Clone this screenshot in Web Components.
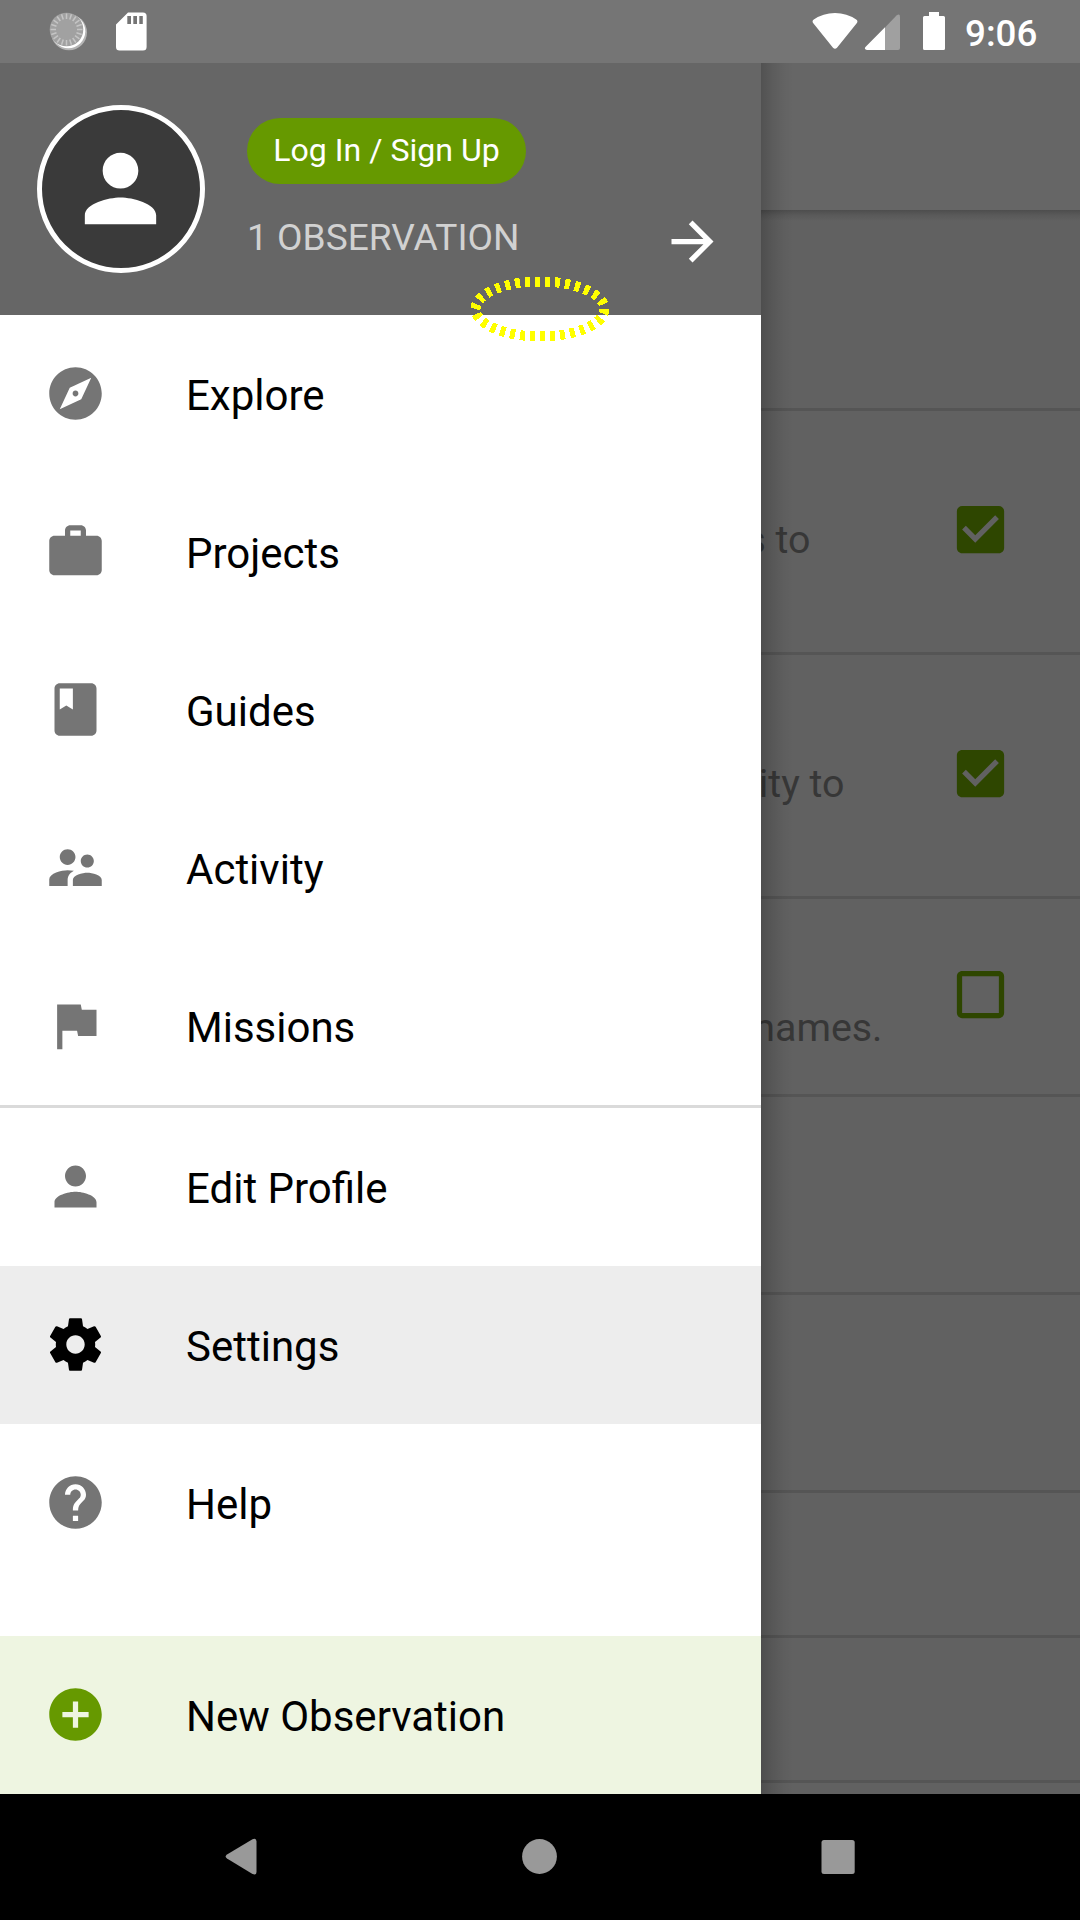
<!DOCTYPE html>
<html lang="en">
<head>
<meta charset="utf-8">
<title>Navigation drawer</title>
<style>
html,body{margin:0;padding:0}
body{width:1080px;height:1920px;overflow:hidden;background:#000;font-family:Roboto,"Noto Sans",sans-serif}
</style>
</head>
<body>
<app-screen></app-screen>
<script>
const define = (name, render) => customElements.define(name, class extends HTMLElement {
  constructor() {
    super();
    this.attachShadow({ mode: 'open' });
  }
  connectedCallback() {
    const t = document.createElement('template');
    t.innerHTML = render(this);
    this.shadowRoot.replaceChildren(t.content.cloneNode(true));
  }
});

const ICONS = {
  explore: 'M12 10.9c-.61 0-1.1.49-1.1 1.1s.49 1.1 1.1 1.1c.61 0 1.1-.49 1.1-1.1s-.49-1.1-1.1-1.1zM12 2C6.48 2 2 6.48 2 12s4.48 10 10 10 10-4.48 10-10S17.52 2 12 2zm2.19 12.19L6 18l3.81-8.19L18 6l-3.81 8.19z',
  work: 'M20 6h-4V4c0-1.11-.89-2-2-2h-4c-1.11 0-2 .89-2 2v2H4c-1.11 0-2 .89-2 2v11c0 1.11.89 2 2 2h16c1.11 0 2-.89 2-2V8c0-1.11-.89-2-2-2zm-6 0h-4V4h4v2z',
  book: 'M18 2H6c-1.1 0-2 .9-2 2v16c0 1.1.9 2 2 2h12c1.1 0 2-.9 2-2V4c0-1.1-.9-2-2-2zM6 4h5v8l-2.5-1.5L6 12V4z',
  people: 'M16.5 12c1.38 0 2.49-1.12 2.49-2.5S17.88 7 16.5 7C15.12 7 14 8.12 14 9.5s1.12 2.5 2.5 2.5zM9 11c1.66 0 2.99-1.34 2.99-3S10.66 5 9 5C7.34 5 6 6.34 6 8s1.34 3 3 3zm7.5 3c-1.83 0-5.5.92-5.5 2.75V19h11v-2.25c0-1.83-3.67-2.75-5.5-2.75zM9 13c-2.33 0-7 1.17-7 3.5V19h7v-2.25c0-.85.33-2.34 2.37-3.47C10.5 13.1 9.66 13 9 13z',
  flag: 'M14.4 6L14 4H5v17h2v-7h5.6l.4 2h7V6z',
  person: 'M12 12c2.21 0 4-1.79 4-4s-1.79-4-4-4-4 1.79-4 4 1.79 4 4 4zm0 2c-2.67 0-8 1.34-8 4v2h16v-2c0-2.66-5.33-4-8-4z',
  settings: 'M19.43 12.98c.04-.32.07-.64.07-.98s-.03-.66-.07-.98l2.11-1.65c.19-.15.24-.42.12-.64l-2-3.46c-.12-.22-.39-.3-.61-.22l-2.49 1c-.52-.4-1.08-.73-1.69-.98l-.38-2.65C14.46 2.18 14.25 2 14 2h-4c-.25 0-.46.18-.49.42l-.38 2.65c-.61.25-1.17.59-1.69.98l-2.49-1c-.23-.09-.49 0-.61.22l-2 3.46c-.13.22-.07.49.12.64l2.11 1.65c-.04.32-.07.65-.07.98s.03.66.07.98l-2.11 1.65c-.19.15-.24.42-.12.64l2 3.46c.12.22.39.3.61.22l2.49-1c.52.4 1.08.73 1.69.98l.38 2.65c.03.24.24.42.49.42h4c.25 0 .46-.18.49-.42l.38-2.65c.61-.25 1.17-.59 1.69-.98l2.49 1c.23.09.49 0 .61-.22l2-3.46c.12-.22.07-.49-.12-.64l-2.11-1.65zM12 15.5c-1.93 0-3.5-1.57-3.5-3.5s1.57-3.5 3.5-3.5 3.5 1.57 3.5 3.5-1.57 3.5-3.5 3.5z',
  help: 'M12 2C6.48 2 2 6.48 2 12s4.48 10 10 10 10-4.48 10-10S17.52 2 12 2zm1 17h-2v-2h2v2zm2.07-7.75l-.9.92C13.45 12.9 13 13.5 13 15h-2v-.5c0-1.1.45-2.1 1.17-2.83l1.24-1.26c.37-.36.59-.86.59-1.41 0-1.1-.9-2-2-2s-2 .9-2 2H8c0-2.21 1.79-4 4-4s4 1.79 4 4c0 .88-.36 1.68-.93 2.25z',
  add: 'M12 2C6.48 2 2 6.48 2 12s4.48 10 10 10 10-4.48 10-10S17.52 2 12 2zm5 11h-4v4h-2v-4H7v-2h4V7h2v4h4v2z',
  arrow: 'M12 4l-1.41 1.41L16.17 11H4v2h12.17l-5.58 5.59L12 20l8-8z',
  checked: 'M19 3H5c-1.11 0-2 .9-2 2v14c0 1.1.89 2 2 2h14c1.11 0 2-.9 2-2V5c0-1.1-.89-2-2-2zm-9 14l-5-5 1.41-1.41L10 14.17l7.59-7.59L19 8l-9 9z',
  unchecked: 'M19 5v14H5V5h14m0-2H5c-1.1 0-2 .9-2 2v14c0 1.1.9 2 2 2h14c1.1 0 2-.9 2-2V5c0-1.1-.9-2-2-2z'
};

define('ui-icon', el => `
<style>:host{display:block;flex:none;width:63px;height:63px}svg{display:block;width:100%;height:100%;fill:currentColor}</style>
<svg viewBox="0 0 24 24"><path d="${ICONS[el.getAttribute('name')]}"/></svg>`);

const ticks = Array.from({ length: 20 }, (_, i) =>
  `<path d="M0-10.5V-16" transform="rotate(${i * 18})"/>`).join('');

define('status-bar', () => `
<style>
:host{display:flex;justify-content:space-between;height:63px;background:#757575;color:#fff}
svg{display:block;flex:none}
.right{display:flex;width:280px}
time{font-size:36.75px;line-height:43px;font-weight:500;padding-top:12px}
</style>
<svg width="160" height="63">
  <circle cx="69" cy="32.3" r="18" fill="#b5b5b5"/>
  <circle cx="68.3" cy="31.3" r="17" fill="#fff"/>
  <circle cx="66.5" cy="29.5" r="16.8" fill="#a1a1a1"/>
  <g transform="translate(66.5 29.5)" stroke="#c5c5c5" stroke-width="1.5">${ticks}</g>
  <path fill="#fff" fill-rule="evenodd" d="M128 12.5H143a3.6 3.6 0 0 1 3.6 3.6V47a3.6 3.6 0 0 1-3.6 3.6H119.6A3.6 3.6 0 0 1 116 47V24.5ZM127.3 16V24H131V16ZM133.3 16V24H137V16ZM139.3 16V24H142.8V16Z"/>
</svg>
<div class="right">
<svg width="165" height="63" viewBox="800 0 165 63">
  <path fill="#fff" d="M813.3 23.2Q811.6 21.2 813.8 19.6Q823 13 835 13T856.2 19.6Q858.4 21.2 856.7 23.2L837 47.7Q835 50 833 47.7Z"/>
  <path fill="#a0a0a0" d="M885 27.5L896.5 15.6Q900 13 900 17V48Q900 50 898 50H885Z"/>
  <path fill="#fff" d="M885 27.3V50H867Q863.5 49 865.7 46.8Z"/>
  <path fill="#fff" d="M929 12H939V16H943.5Q945 16 945 17.5V48.5Q945 50 943.5 50H924.5Q923 50 923 48.5V17.5Q923 16 924.5 16H929Z"/>
</svg>
<time>9:06</time>
</div>`);

define('setting-row', el => `
<style>
:host{display:flex;box-sizing:border-box;border-bottom:3px solid #555;color:#373737;height:${el.getAttribute('h')}px}
span{box-sizing:border-box;width:${el.getAttribute('end') || 0}px;padding-top:106px;text-align:right;font-size:39.375px;line-height:46px;white-space:nowrap}
ui-icon{margin-left:auto;align-self:center;margin-right:68px;margin-bottom:4px;color:#2e4600}
</style>
<span><slot></slot></span>${el.hasAttribute('icon') ? `<ui-icon name="${el.getAttribute('icon')}"></ui-icon>` : ''}`);

define('settings-page', () => `
<style>
:host{display:flex;flex-direction:column;background:#616161;overflow:hidden}
header{flex:none;height:147px;background:#666}
.shade{flex:none;height:11px;margin-bottom:-11px;background:linear-gradient(#4d4d4d,#595959 45%,#616161)}
setting-row{flex:none}
</style>
<header></header><div class="shade"></div>
<setting-row h="201"></setting-row>
<setting-row h="244" end="810.5" icon="checked">s to</setting-row>
<setting-row h="244" end="844.5" icon="checked">ity to</setting-row>
<setting-row h="198" end="882.5" icon="unchecked">names.</setting-row>
<setting-row h="198"></setting-row>
<setting-row h="198"></setting-row>
<setting-row h="145"></setting-row>
<setting-row h="145"></setting-row>`);

define('profile-header', () => `
<style>
:host{display:flex;height:252px;background:#666;color:#fff}
.avatar{box-sizing:border-box;width:168px;height:168px;margin:42px 42px 0 37px;border:5px solid #fff;border-radius:50%;background:#3a3a3a;display:flex}
.avatar ui-icon{width:107px;height:107px;margin:25px 0 0 25px}
.info{display:flex;flex-direction:column;align-items:flex-start;padding-top:55px;flex:1}
.login{box-sizing:border-box;width:279px;height:66px;border-radius:33px;background:#690;padding-top:14px;text-align:center;font-size:32.1px;line-height:37px;white-space:nowrap}
.count{margin-top:32px;font-size:37.1px;line-height:43px;color:#d1d1d1;white-space:nowrap}
.go{margin:147px 37px 0 0}
</style>
<div class="avatar"><ui-icon name="person"></ui-icon></div>
<div class="info"><div class="login">Log In / Sign Up</div><div class="count">1 OBSERVATION</div></div>
<ui-icon class="go" name="arrow"></ui-icon>`);

define('drawer-item', el => `
<style>
:host{display:flex;height:158px;color:#000}
:host([selected]){background:#ededed}
:host([primary]){background:#eef5e1}
ui-icon{margin:47px 79px 0 44px;color:#757575}
:host([selected]) ui-icon{color:#000}
:host([primary]) ui-icon{color:#690}
span{padding-top:56px;font-size:42px;line-height:49px;white-space:nowrap}
</style>
<ui-icon name="${el.getAttribute('icon')}"></ui-icon><span><slot></slot></span>`);

define('nav-drawer', () => `
<style>
:host{display:flex}
.panel{width:761px;display:flex;flex-direction:column;background:#fff}
.divider{height:3px;background:#dadada}
.spacer{flex:1}
.edge{width:33px;background:linear-gradient(90deg,rgba(0,0,0,.2),rgba(0,0,0,.1) 35%,rgba(0,0,0,.03) 70%,transparent)}
</style>
<div class="panel">
  <profile-header></profile-header>
  <drawer-item icon="explore">Explore</drawer-item>
  <drawer-item icon="work">Projects</drawer-item>
  <drawer-item icon="book">Guides</drawer-item>
  <drawer-item icon="people">Activity</drawer-item>
  <drawer-item icon="flag">Missions</drawer-item>
  <div class="divider"></div>
  <drawer-item icon="person">Edit Profile</drawer-item>
  <drawer-item icon="settings" selected>Settings</drawer-item>
  <drawer-item icon="help">Help</drawer-item>
  <div class="spacer"></div>
  <drawer-item icon="add" primary>New Observation</drawer-item>
</div>
<div class="edge"></div>`);

define('nav-bar', () => `
<style>
:host{display:flex;height:126px;background:#000}
svg{display:block;fill:#999}
</style>
<svg width="1080" height="126">
  <path d="M227 64.5Q224.3 62.5 227 60.4L252.5 45.3Q256.5 43.8 256.5 47.5V78Q256.5 81.7 252.5 80.1Z"/>
  <circle cx="539.5" cy="62.5" r="17.4"/>
  <rect x="821.5" y="46" width="33.2" height="34" rx="2.5"/>
</svg>`);

define('focus-ring', () => `
<style>:host{display:block;position:absolute;left:469px;top:276px}svg{display:block}</style>
<svg width="142" height="67"><ellipse cx="71" cy="33" rx="64.5" ry="27.5" pathLength="300" fill="none" stroke="#ff0" stroke-width="10" stroke-dasharray="5 5" shape-rendering="crispEdges"/></svg>`);

define('app-screen', () => `
<style>
:host{display:grid;position:relative;width:1080px;height:1920px;grid-template-columns:1080px;grid-template-rows:63px 1731px 126px;overflow:hidden}
settings-page,nav-drawer{grid-area:2/1;min-height:0}
nav-drawer{z-index:1;justify-self:start}
nav-bar{grid-row:3}
focus-ring{z-index:2}
</style>
<status-bar></status-bar>
<settings-page></settings-page>
<nav-drawer></nav-drawer>
<nav-bar></nav-bar>
<focus-ring></focus-ring>`);
</script>
</body>
</html>
